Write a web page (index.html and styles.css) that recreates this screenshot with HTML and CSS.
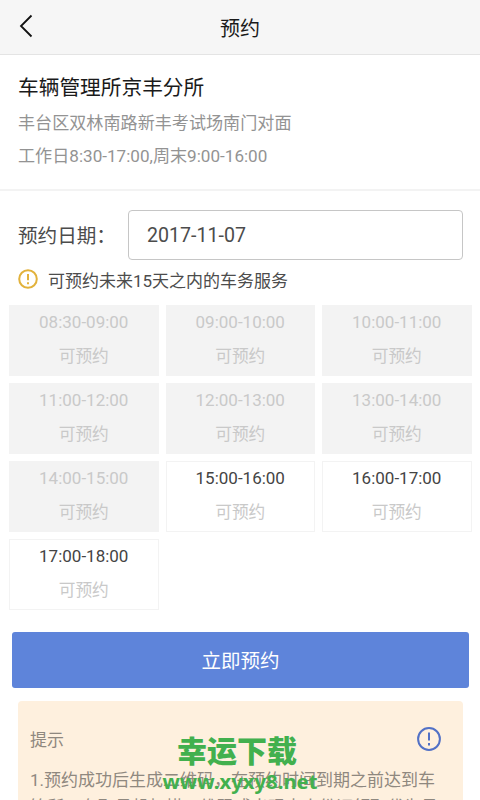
FILE: index.html
```html
<!DOCTYPE html>
<html lang="zh-CN">
<head>
<meta charset="utf-8">
<title>预约</title>
<link rel="stylesheet" href="styles.css">
</head>
<body>
<header class="topbar">
  <svg class="back" width="14" height="24" viewBox="0 0 14 24"><path d="M12.5 1.5 L2 12 L12.5 22.5"/></svg>
  <h1>预约</h1>
</header>
<section class="office">
  <h2>车辆管理所京丰分所</h2>
  <p>丰台区双林南路新丰考试场南门对面</p>
  <p>工作日8:30-17:00,周末9:00-16:00</p>
</section>
<div class="date-row">
  <span class="date-label">预约日期：</span>
  <div class="date-input">2017-11-07</div>
</div>
<div class="notice">
  <svg width="20" height="20" viewBox="0 0 20 20"><circle cx="10" cy="10" r="8.8"/><path d="M10 5v6.2M10 13.2v2"/></svg>
  <span>可预约未来15天之内的车务服务</span>
</div>
<main class="slots">
  <div class="slot off"><b>08:30-09:00</b><span>可预约</span></div>
  <div class="slot off"><b>09:00-10:00</b><span>可预约</span></div>
  <div class="slot off"><b>10:00-11:00</b><span>可预约</span></div>
  <div class="slot off"><b>11:00-12:00</b><span>可预约</span></div>
  <div class="slot off"><b>12:00-13:00</b><span>可预约</span></div>
  <div class="slot off"><b>13:00-14:00</b><span>可预约</span></div>
  <div class="slot off"><b>14:00-15:00</b><span>可预约</span></div>
  <div class="slot"><b>15:00-16:00</b><span>可预约</span></div>
  <div class="slot"><b>16:00-17:00</b><span>可预约</span></div>
  <div class="slot"><b>17:00-18:00</b><span>可预约</span></div>
</main>
<button class="submit">立即预约</button>
<section class="tips">
  <div class="tips-head">
    <span>提示</span>
    <svg width="24" height="24" viewBox="0 0 24 24"><circle cx="12" cy="12" r="10.9"/><path d="M12 5.5v8M12 16v2.4"/></svg>
  </div>
  <p>1.预约成功后生成二维码，在预约时间到期之前达到车<br>管所，在取号机扫描二维码或出现本人份证领取代为号</p>
</section>
<div class="watermark"><strong>幸运下载</strong><em>www.xyxy8.net</em></div>
</body>
</html>
```
FILE: styles.css
```css
* { box-sizing: border-box; }
body {
  margin: 0;
  height: 800px;
  overflow: hidden;
  position: relative;
  background: #fff;
  color: #4c4c4c;
  font-family: Roboto, "Noto Sans CJK SC", sans-serif;
  font-weight: 400;
}
h1, h2, p { margin: 0; font-weight: 400; }
.topbar {
  height: 55px;
  padding-left: 19px;
  display: grid;
  grid-template-columns: 14px 1fr 33px;
  align-items: center;
  background: #f6f6f6;
  border-bottom: 1px solid #e4e4e4;
}
.back { fill: none; stroke: #111; stroke-width: 1.8; margin-bottom: 3px; }
.topbar h1 { font-size: 20px; text-align: center; color: #1a1a1a; }
.office { height: 136px; padding: 17px 18px 0; border-bottom: 2px solid #f3f3f3; }
.office h2 { font-size: 20.7px; line-height: 32px; color: #1a1a1a; }
.office p { font-size: 17.1px; line-height: 33px; color: #939393; margin-top: 3px; }
.office p + p { margin-top: 0; }
.date-row { display: flex; margin-top: 19px; padding: 0 17px 0 18px; height: 50px; align-items: center; }
.date-label { width: 110px; font-size: 19.6px; white-space: nowrap; padding-bottom: 2px; }
.date-input {
  flex: 1;
  height: 50px;
  border: 1px solid #c6c6c6;
  border-radius: 4px;
  padding-left: 18px;
  font-size: 19.6px;
  line-height: 50px;
}
.notice { display: flex; align-items: center; gap: 10px; height: 38px; padding-left: 18px; font-size: 17px; }
.notice svg { fill: none; stroke: #e2b23c; stroke-width: 2; }
.slots { display: grid; grid-template-columns: repeat(3, 149.5px); grid-auto-rows: 71px; gap: 7px; margin: 7px 0 0 9px; }
.slot { border: 1.5px solid #f3f3f3; display: flex; flex-direction: column; align-items: center; font-size: 16.7px; color: #c9c9c9; }
.slot b { font-size: 17px; font-weight: 400; line-height: 32px; color: #444; }
.slot span { line-height: 38px; }
.off { background: #f3f3f3; }
.off b { color: #c9c9c9; }
.submit {
  display: block;
  width: 457px;
  height: 56px;
  margin: 22px 0 0 12px;
  padding: 0 0 2px;
  border: 0;
  border-radius: 3px;
  background: #5e84da;
  color: #fff;
  font: inherit;
  font-size: 19.5px;
}
.tips { margin: 13px 17px 0 18px; height: 120px; padding: 24px 12px 0; border-radius: 4px; background: #fef0de; color: #8f887f; font-size: 17px; }
.tips-head { display: flex; justify-content: space-between; align-items: center; height: 28px; padding-right: 10px; }
.tips-head span { padding-bottom: 1px; }
.tips-head svg { fill: none; stroke: #5271c6; stroke-width: 2; }
.tips p { line-height: 27px; margin-top: 14px; white-space: nowrap; }
.watermark {
  position: absolute;
  left: 162px;
  top: 735px;
  width: 156px;
  display: flex;
  flex-direction: column;
  align-items: center;
  color: #42b04e;
  font-weight: 700;
}
.watermark strong { font-size: 30px; line-height: 34px; margin-right: 6px; }
.watermark em { font: 700 20.3px/24px "Noto Sans", sans-serif; }
```
